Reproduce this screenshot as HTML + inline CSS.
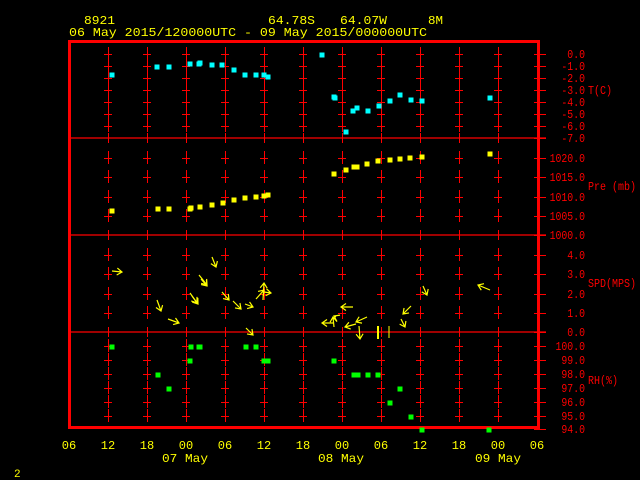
<!DOCTYPE html>
<html><head><meta charset="utf-8"><style>
html,body{margin:0;padding:0;background:#000;width:640px;height:480px;overflow:hidden}
svg{display:block}
text{font-family:"Liberation Mono",monospace}
</style></head><body>
<svg id="s" width="640" height="480" xmlns="http://www.w3.org/2000/svg">
<rect width="640" height="480" fill="#000"/>
<g fill="#ffff00" font-size="12">
<text x="84" y="24" textLength="31" lengthAdjust="spacingAndGlyphs">8921</text>
<text x="268" y="24" textLength="47" lengthAdjust="spacingAndGlyphs">64.78S</text>
<text x="340" y="24" textLength="47" lengthAdjust="spacingAndGlyphs">64.07W</text>
<text x="428" y="24" textLength="15" lengthAdjust="spacingAndGlyphs">8M</text>
<text x="69" y="36" textLength="358" lengthAdjust="spacingAndGlyphs">06 May 2015/120000UTC - 09 May 2015/000000UTC</text>
<text x="14" y="477" font-size="11">2</text>
</g>
<g id="grid" stroke="#ff0000" stroke-width="1" fill="none"></g>
<g stroke="#ff0000" stroke-width="1.2">
<line x1="70" y1="138" x2="546" y2="138"/>
<line x1="70" y1="235" x2="546" y2="235"/>
<line x1="70" y1="332" x2="546" y2="332"/>
</g>
<rect x="69.5" y="41.5" width="469" height="386" fill="none" stroke="#ff0000" stroke-width="3"/>
<g id="lab" fill="#ff0000" font-size="12"></g>
<g fill="#ff0000" font-size="12">
<text x="588" y="94" textLength="24" lengthAdjust="spacingAndGlyphs">T(C)</text>
<text x="588" y="190" textLength="48" lengthAdjust="spacingAndGlyphs">Pre (mb)</text>
<text x="588" y="287" textLength="48" lengthAdjust="spacingAndGlyphs">SPD(MPS)</text>
<text x="588" y="384" textLength="30" lengthAdjust="spacingAndGlyphs">RH(%)</text>
</g>
<g id="bot" fill="#ffff00" font-size="12"></g>
<g fill="#ffff00" font-size="12">
<text x="162" y="462" textLength="46" lengthAdjust="spacingAndGlyphs">07 May</text>
<text x="318" y="462" textLength="46" lengthAdjust="spacingAndGlyphs">08 May</text>
<text x="475" y="462" textLength="46" lengthAdjust="spacingAndGlyphs">09 May</text>
</g>
<g id="pts"></g>
<g id="wind" stroke="#ffff00" stroke-width="1.2" fill="none"></g>
<g stroke="#ffff00" stroke-width="2">
<line x1="378" y1="326" x2="378" y2="339"/>
</g>
<g stroke="#ffff00" stroke-width="1">
<line x1="389" y1="326" x2="389" y2="338"/>
</g>
</svg>
<script>
var NS="http://www.w3.org/2000/svg";
function el(p,t,a){var e=document.createElementNS(NS,t);for(var k in a)e.setAttribute(k,a[k]);p.appendChild(e);return e;}
var g=document.getElementById('grid');
var cols=[];for(var i=1;i<12;i++)cols.push(69+39*i);
var ticksT=[54,66,78,90,102,114,126],ticksP=[158,177,197,216],ticksS=[255,274,294,313],ticksR=[346,360,374,388,402,416];
var all=ticksT.concat(ticksP,ticksS,ticksR);
cols.forEach(function(x){all.forEach(function(y){
 el(g,'line',{x1:x-4,y1:y+.5,x2:x+4,y2:y+.5});
 el(g,'line',{x1:x+.5,y1:y-7,x2:x+.5,y2:y+6});
});
 [138,235,332].forEach(function(y){el(g,'line',{x1:x+.5,y1:y-5,x2:x+.5,y2:y+5});});
});
[54,66,78,90,102,114,126,138,158,177,197,216,235,255,274,294,313,332,346,360,374,388,402,416,429].forEach(function(y){el(g,'line',{x1:534,y1:y+.5,x2:546,y2:y+.5});});
var lab=document.getElementById('lab');
var L=[[54,"0.0"],[66,"-1.0"],[78,"-2.0"],[90,"-3.0"],[102,"-4.0"],[114,"-5.0"],[126,"-6.0"],[138,"-7.0"],
[158,"1020.0"],[177,"1015.0"],[197,"1010.0"],[216,"1005.0"],[235,"1000.0"],
[255,"4.0"],[274,"3.0"],[294,"2.0"],[313,"1.0"],[332,"0.0"],
[346,"100.0"],[360,"99.0"],[374,"98.0"],[388,"97.0"],[402,"96.0"],[416,"95.0"],[429,"94.0"]];
L.forEach(function(l){var n=l[1].length*5.9;var t=el(lab,'text',{x:585-n,y:l[0]+4,textLength:n,lengthAdjust:'spacingAndGlyphs'});t.textContent=l[1];});
var bot=document.getElementById('bot');
var bl=["06","12","18","00","06","12","18","00","06","12","18","00","06"];
bl.forEach(function(s,i){var t=el(bot,'text',{x:69+39*i,y:449,'text-anchor':'middle'});t.textContent=s;});
var pts=document.getElementById('pts');
function P(arr,c){arr.forEach(function(p){el(pts,'rect',{x:p[0]-2.5,y:p[1]-2.5,width:5,height:5,fill:c});});}
P([[112,75],[157,67],[169,67],[190,64],[199,64],[200,63],[212,65],[222,65],[234,70],[245,75],[256,75],[264,75],[268,77],[322,55],[334,97],[335,98],[346,132],[353,111],[357,108],[368,111],[379,106],[390,101],[400,95],[411,100],[422,101],[490,98]],"#00ffff");
P([[112,211],[158,209],[169,209],[190,209],[191,208],[200,207],[212,205],[223,203],[234,200],[245,198],[256,197],[264,196],[268,195],[334,174],[346,170],[354,167],[357,167],[367,164],[378,161],[390,160],[400,159],[410,158],[422,157],[490,154]],"#ffff00");
P([[112,347],[158,375],[169,389],[191,347],[190,361],[199,347],[200,347],[246,347],[256,347],[264,361],[268,361],[334,361],[354,375],[358,375],[368,375],[378,375],[390,403],[400,389],[411,417],[422,430],[489,430]],"#00ff00");
var w=document.getElementById('wind');
function A(x1,y1,x2,y2){var dx=x2-x1,dy=y2-y1,l=Math.sqrt(dx*dx+dy*dy),ux=dx/l,uy=dy/l,h=5;
 var ax=x2-h*ux-h*.7*uy, ay=y2-h*uy+h*.7*ux, bx=x2-h*ux+h*.7*uy, by=y2-h*uy-h*.7*ux;
 el(w,'path',{d:'M'+x1+' '+y1+'L'+x2+' '+y2+'M'+ax+' '+ay+'L'+x2+' '+y2+'L'+bx+' '+by});}
A(112,271,122,272);A(212,257,216,267);A(199,275,207,285);A(201,279,207,286);
A(190,293,197,303);A(192,296,198,304);A(157,300,161,311);A(168,319,179,323);
A(222,292,229,300);A(233,301,241,309);A(245,304,253,307);A(246,328,253,335);
A(263,300,264,283);A(256,299,264,290);A(264,292,271,293);
A(353,307,341,307);A(336,317,334,316);A(333,323,322,323);A(334,327,333,317);
A(356,324,345,327);A(359,326,360,339);A(367,317,356,322);
A(411,306,403,314);A(401,319,405,327);A(423,286,427,295);A(490,290,478,285);
</script>
</body></html>
